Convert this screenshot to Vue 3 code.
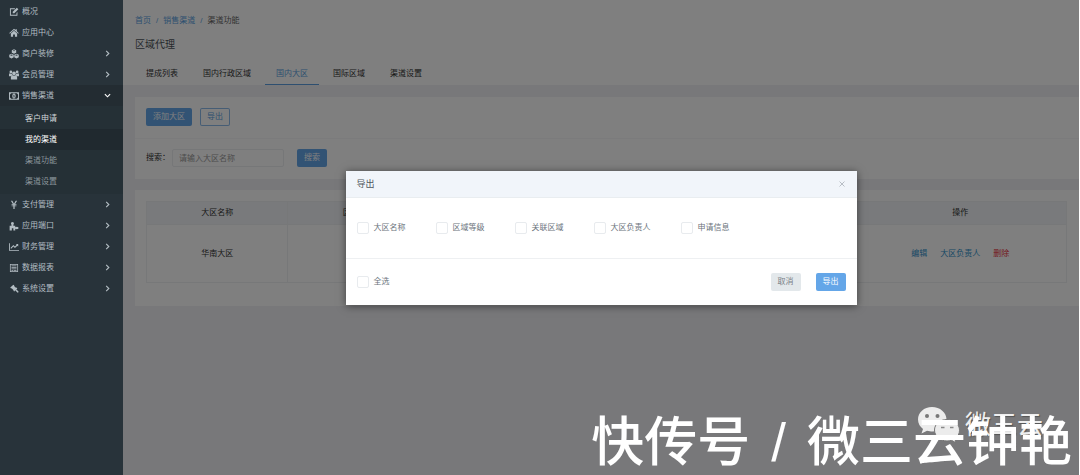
<script setup>
import { ref } from 'vue'

const menuTop = [
  { label: '概况', icon: 'edit' },
  { label: '应用中心', icon: 'home' },
  { label: '商户装修', icon: 'cubes', arrow: 'right' },
  { label: '会员管理', icon: 'users', arrow: 'right' },
  { label: '销售渠道', icon: 'money', arrow: 'down', open: true },
]
const subMenu = [
  { label: '客户申请', tone: 'bright' },
  { label: '我的渠道', tone: 'current' },
  { label: '渠道功能', tone: '' },
  { label: '渠道设置', tone: '' },
]
const menuBottom = [
  { label: '支付管理', icon: 'yen', arrow: 'right' },
  { label: '应用端口', icon: 'puzzle', arrow: 'right' },
  { label: '财务管理', icon: 'chart', arrow: 'right' },
  { label: '数据报表', icon: 'report', arrow: 'right' },
  { label: '系统设置', icon: 'gavel', arrow: 'right' },
]
const icons = {
  edit: 'M2.5 2h7v1.500h-6.500v9h9V9.500l1.500-1.500v6h-12V2zM12.500 1l2.500 2.500-6.500 6.500H6V7.500z',
  home: 'M8 1l2.500 2.300V2h2v3.200L15.500 8l-.8 1L8 3.200 1.300 9l-.8-1zM8 4.200l5 4.600V14H9.500v-3.500h-3V14H3V8.800z',
  cubes: 'M8 .5l3.500 1.600v3.800L8 7.500 4.500 5.900V2.100zM8 1.800L5.900 2.700 8 3.700l2.100-1zM4 7.500l3.600 1.700v4L4 15 .4 13.200v-4zM4 8.800l-2.200 1L4 10.900l2.200-1.100zM12 7.500l3.600 1.700v4L12 15l-3.600-1.800v-4zM12 8.800l-2.200 1 2.200 1.100 2.200-1.100z',
  users: 'M3 .8a2.200 2.200 0 1 1 0 4.400 2.200 2.200 0 0 1 0-4.400zM13 .8a2.200 2.200 0 1 1 0 4.400 2.200 2.200 0 0 1 0-4.400zM8 2.200a3 3 0 1 1 0 6 3 3 0 0 1 0-6zM0 10V7Q.2 5.300 1.500 5.400q1.600 1 3 .3Q4.500 7.200 5.500 8.200 4 8.200 3 10zM16 10V7q-.2-1.700-1.500-1.600-1.600 1-3 .3 0 1.500-1 2.500 1.500 0 2.500 1.800zM3 15v-3.500Q3.300 8.500 5.500 8.500 8 10 10.500 8.500q2.200 0 2.500 3V15z',
  money: 'M0 2h16v12H0zM3 3.600A2 2 0 0 1 1.500 5.500v5A2 2 0 0 1 3 12.400h10a2 2 0 0 1 1.500-1.900v-5A2 2 0 0 1 13 3.600zM8 4c3.600 0 3.600 8 0 8s-3.600-8 0-8zM6.800 6.500v.8h.7v2h-.9v.8h2.800v-.8h-.8V5.800h-.8z',
  yen: 'M3 1h2.300L8 6l2.700-5H13L9.900 6.500h2v1.200H9v1.100h2.900V10H9v4.500H7V10H4.100V8.800H7V7.700H4.100V6.500h2z',
  puzzle: 'M1 7.500h3V6Q2.500 4.500 3.500 2.500q2-2 4 0 1 2-.5 3.500v1.500h3v2.500q2.500-1.500 5 0v2.500q-2.500 1.500-5 0V15H7v-3.500H4.500V15H1z',
  chart: 'M0 2h1.400v10.600H16V14H0zM14.700 3v4l-1.300-1.200L9.500 9.700 7 7.200 3.500 10.700 2.300 9.500 7 4.800l2.500 2.500 2.800-2.800L11 3z',
  report: 'M1.500 1.500h13v13h-13zM2.700 2.700v10.600h10.600V2.700zM4 4h8v1.200H4zM4 6.400h8v1.200H4zM4 8.800h8V10H4zM4 11.200h2.500v1.200H4zM7.500 11.200H12v1.200H7.500z',
  gavel: 'M7 1l1.500 1.300-.4.800 3 3 .9-.4L13.300 7l-1.100 1.200-1-.3 4 4q.6 1.700-1.400 2.100L9.400 9.700l.2.900L8.300 12 7 10.700l.4-.9-3.200-3.200-.9.400L2 5.700z',
}

const tabs = ['提成列表', '国内行政区域', '国内大区', '国际区域', '渠道设置']
const activeTab = ref('国内大区')
const columns = ['大区名称', '区域等级', '关联区域', '大区负责人', '申请信息', '操作']
const rows = [{ name: '华南大区' }]
const exportFields = ['大区名称', '区域等级', '关联区域', '大区负责人', '申请信息']
const chosen = ref([])
const allChosen = ref(false)
const keyword = ref('')
</script>

<template>
  <div class="app">
    <nav class="sidebar">
      <a v-for="m in menuTop" :key="m.label" href="#" class="item" :class="{ open: m.open }">
        <svg class="icon" viewBox="0 0 16 16"><path fill-rule="evenodd" :d="icons[m.icon]" /></svg>
        <span>{{ m.label }}</span>
        <svg v-if="m.arrow" class="arrow" :class="m.arrow" viewBox="0 0 8 8"><path d="M2.500 1l3 3-3 3" /></svg>
      </a>
      <div class="submenu">
        <a v-for="s in subMenu" :key="s.label" href="#" class="subitem" :class="s.tone">{{ s.label }}</a>
      </div>
      <a v-for="m in menuBottom" :key="m.label" href="#" class="item">
        <svg class="icon" viewBox="0 0 16 16"><path fill-rule="evenodd" :d="icons[m.icon]" /></svg>
        <span>{{ m.label }}</span>
        <svg class="arrow" viewBox="0 0 8 8"><path d="M2.500 1l3 3-3 3" /></svg>
      </a>
    </nav>

    <main class="main">
      <header class="head">
        <div class="crumbs">
          <a href="#">首页</a><i>/</i><a href="#">销售渠道</a><i>/</i><span>渠道功能</span>
        </div>
        <h1>区域代理</h1>
        <div class="tabs">
          <button v-for="t in tabs" :key="t" type="button" :class="{ active: t === activeTab }" @click="activeTab = t">{{ t }}</button>
        </div>
      </header>

      <section class="card">
        <div class="toolbar">
          <button type="button" class="btn primary">添加大区</button>
          <button type="button" class="btn outline">导出</button>
        </div>
        <form class="search" @submit.prevent>
          <label for="keyword">搜索：</label>
          <input id="keyword" v-model="keyword" type="text" placeholder="请输入大区名称" />
          <button type="submit" class="btn primary">搜索</button>
        </form>
      </section>

      <section class="card table-card">
        <table>
          <thead>
            <tr><th v-for="c in columns" :key="c">{{ c }}</th></tr>
          </thead>
          <tbody>
            <tr v-for="r in rows" :key="r.name">
              <td>{{ r.name }}</td>
              <td></td><td></td><td></td><td></td>
              <td>
                <div class="actions">
                  <a href="#">编辑</a>
                  <a href="#">大区负责人</a>
                  <a href="#" class="danger">删除</a>
                </div>
              </td>
            </tr>
          </tbody>
        </table>
      </section>

      <div class="overlay">
        <div class="modal" role="dialog" aria-labelledby="dialog-title">
          <div class="modal-head">
            <h2 id="dialog-title">导出</h2>
            <button type="button" class="close" aria-label="关闭">
              <svg viewBox="0 0 8 8"><path d="M1.500 1.500l5 5M6.500 1.500l-5 5" /></svg>
            </button>
          </div>
          <div class="modal-body">
            <label v-for="f in exportFields" :key="f" class="check">
              <input v-model="chosen" type="checkbox" :value="f" />{{ f }}
            </label>
          </div>
          <div class="modal-foot">
            <label class="check"><input v-model="allChosen" type="checkbox" />全选</label>
            <div class="modal-buttons">
              <button type="button" class="btn muted">取消</button>
              <button type="button" class="btn primary">导出</button>
            </div>
          </div>
        </div>
      </div>
    </main>

    <div class="wechat">
      <svg viewBox="0 0 44 38">
        <path d="M15 1C7 1 1 6.500 1 13.500c0 4 2 7.200 5 9.500l-1.500 4.500 5.500-2.700c2 .6 3.500.7 5.500.7 8 0 14-5 14-12S23 1 15 1z" />
        <path class="front" d="M30 13.500c-7 0-12.500 4.500-12.500 10.500S23 35 30 35c1.500 0 3-.2 4.500-.7l4.500 2.500-1.200-4c3-2 4.700-5 4.700-8.500C42.500 18 37 13.500 30 13.500z" />
        <circle cx="10" cy="10" r="2" /><circle cx="20.500" cy="10" r="2" />
        <path class="eye" d="M24 21.500h3.500M33 21.500h3.500" />
      </svg>
      <span>微三云</span>
    </div>
    <div class="credit"><span>快传号</span><span>/</span><span>微三云钟艳</span></div>
  </div>
</template>

<style>
body {
  margin: 0;
}
</style>

<style scoped>
.app {
  position: relative;
  display: flex;
  min-height: 100vh;
  box-sizing: border-box;
  padding-right: 1px;
  overflow: hidden;
  background: #fff;
  font: 8px/12px "Liberation Sans", "Noto Sans CJK SC", sans-serif;
  color: #333;
}
a {
  text-decoration: none;
}
button,
input {
  font: inherit;
  box-sizing: border-box;
}
.sidebar {
  flex: 0 0 123px;
  padding-top: 1px;
  box-sizing: border-box;
  background: #28333a;
}
.item {
  display: flex;
  align-items: center;
  height: 21px;
  padding: 0 12px 0 9px;
  color: #b3bdc3;
}
.item.open {
  background: #232c32;
}
.icon {
  width: 10px;
  height: 10px;
  margin-right: 3px;
  fill: #b3bdc3;
}
.arrow {
  width: 7px;
  height: 7px;
  margin-left: auto;
  fill: none;
  stroke: #b3bdc3;
  stroke-width: 1.3;
}
.arrow.down {
  transform: rotate(90deg);
  stroke: #fff;
}
.submenu {
  padding: 2px 0;
  background: #253036;
}
.subitem {
  display: block;
  padding-left: 25px;
  line-height: 21px;
  color: #8b969c;
}
.subitem.bright {
  color: #d0d6d9;
}
.subitem.current {
  color: #fff;
  background: #20292f;
}
.main {
  position: relative;
  flex: 1;
  min-width: 0;
  background: #f0f1f4;
}
.head {
  padding: 15px 12px 0;
  background: #fff;
}
.crumbs {
  display: flex;
  gap: 5px;
  color: #666;
}
.crumbs a,
.crumbs i {
  color: #5c9fe0;
  font-style: normal;
}
h1 {
  margin: 10px 0;
  font-size: 10px;
  line-height: 16px;
  font-weight: 400;
  color: #4c5259;
}
.tabs {
  display: flex;
  gap: 3px;
}
.tabs button {
  height: 22px;
  padding: 0 11px;
  border: 0;
  border-bottom: 1px solid transparent;
  background: none;
  color: #333;
}
.tabs button.active {
  color: #5c9fe0;
  border-color: #5c9fe0;
}
.card {
  margin: 12px 0 0 12px;
  background: #fff;
}
.toolbar {
  display: flex;
  gap: 8px;
  padding: 11px 11px 12px;
  border-bottom: 1px solid #f6f7f8;
}
.btn {
  height: 18px;
  padding: 0 7px;
  border: 0;
  border-radius: 2px;
  line-height: 18px;
}
.primary {
  background: #64a6e8;
  color: #fff;
}
.outline {
  background: #fff;
  box-shadow: inset 0 0 0 1px #8dbbea;
  color: #5c9fe0;
}
.muted {
  background: #e3e8eb;
  color: #7a8288;
}
.search {
  display: flex;
  align-items: center;
  padding: 10px 11px 12px;
}
.search input {
  width: 112px;
  height: 18px;
  margin: 0 13px 0 2px;
  padding: 0 6px;
  border: 1px solid #eceef1;
  border-radius: 2px;
  background: #fff;
}
.search input::placeholder {
  color: #999;
}
.table-card {
  margin-top: 11px;
  padding: 11px 12px 23px 11px;
}
table {
  width: 100%;
  table-layout: fixed;
  border-collapse: collapse;
}
th,
td {
  padding: 0;
  height: 22px;
  border: 1px solid #eff1f3;
  font-weight: 400;
  text-align: center;
}
th {
  background: #f2f5f8;
}
th:last-child {
  width: 23%;
}
td {
  height: 57px;
}
.actions {
  display: flex;
  justify-content: center;
  gap: 13px;
}
.actions a {
  color: #2f8fca;
}
.actions .danger {
  color: #e8303a;
}
.overlay {
  position: absolute;
  inset: 0;
  display: flex;
  align-items: center;
  justify-content: center;
  background: rgba(0, 0, 0, 0.5);
}
.modal {
  width: 511px;
  max-width: 100%;
  background: #fff;
  box-shadow: 0 1px 8px rgba(0, 0, 0, 0.5);
  color: #6c747c;
}
.modal-head {
  display: flex;
  align-items: center;
  justify-content: space-between;
  height: 26px;
  padding: 0 11px;
  background: #f1f5fa;
  border-bottom: 1px solid #e9edf0;
}
h2 {
  margin: 0;
  font-size: 9px;
  line-height: 14px;
  font-weight: 400;
  color: #4f565d;
}
.close {
  display: flex;
  padding: 0;
  border: 0;
  background: none;
}
.close svg {
  width: 8px;
  height: 8px;
  stroke: #a9b0b7;
  stroke-width: 0.8;
}
.modal-body {
  display: flex;
  align-items: center;
  gap: 30px;
  height: 60px;
  padding: 0 11px;
  border-bottom: 1px solid #eef0f2;
}
.check {
  display: flex;
  align-items: center;
  gap: 5px;
}
.check input {
  appearance: none;
  width: 12px;
  height: 12px;
  margin: 0;
  border: 1px solid #e8ebee;
  border-radius: 2px;
  background: #fff;
}
.check input:checked {
  background: #64a6e8;
}
.modal-foot {
  display: flex;
  align-items: center;
  justify-content: space-between;
  height: 46px;
  padding: 0 11px;
}
.modal-buttons {
  display: flex;
  gap: 15px;
}
.wechat {
  position: absolute;
  right: 37px;
  bottom: 31px;
  display: flex;
  align-items: center;
  gap: 4px;
  font-size: 26px;
  line-height: 38px;
  color: #eee;
  text-shadow: 1px 1px 1px #555;
}
.wechat svg {
  width: 44px;
  height: 38px;
  fill: #ececec;
}
.wechat .front {
  stroke: #777;
  stroke-width: 1;
}
.wechat circle {
  fill: #777;
}
.wechat .eye {
  stroke: #888;
  stroke-width: 1.5;
}
.credit {
  position: absolute;
  right: 8px;
  bottom: 2px;
  display: flex;
  gap: 21px;
  font-size: 53px;
  font-weight: 500;
  line-height: 60px;
  color: #fff;
}
</style>
